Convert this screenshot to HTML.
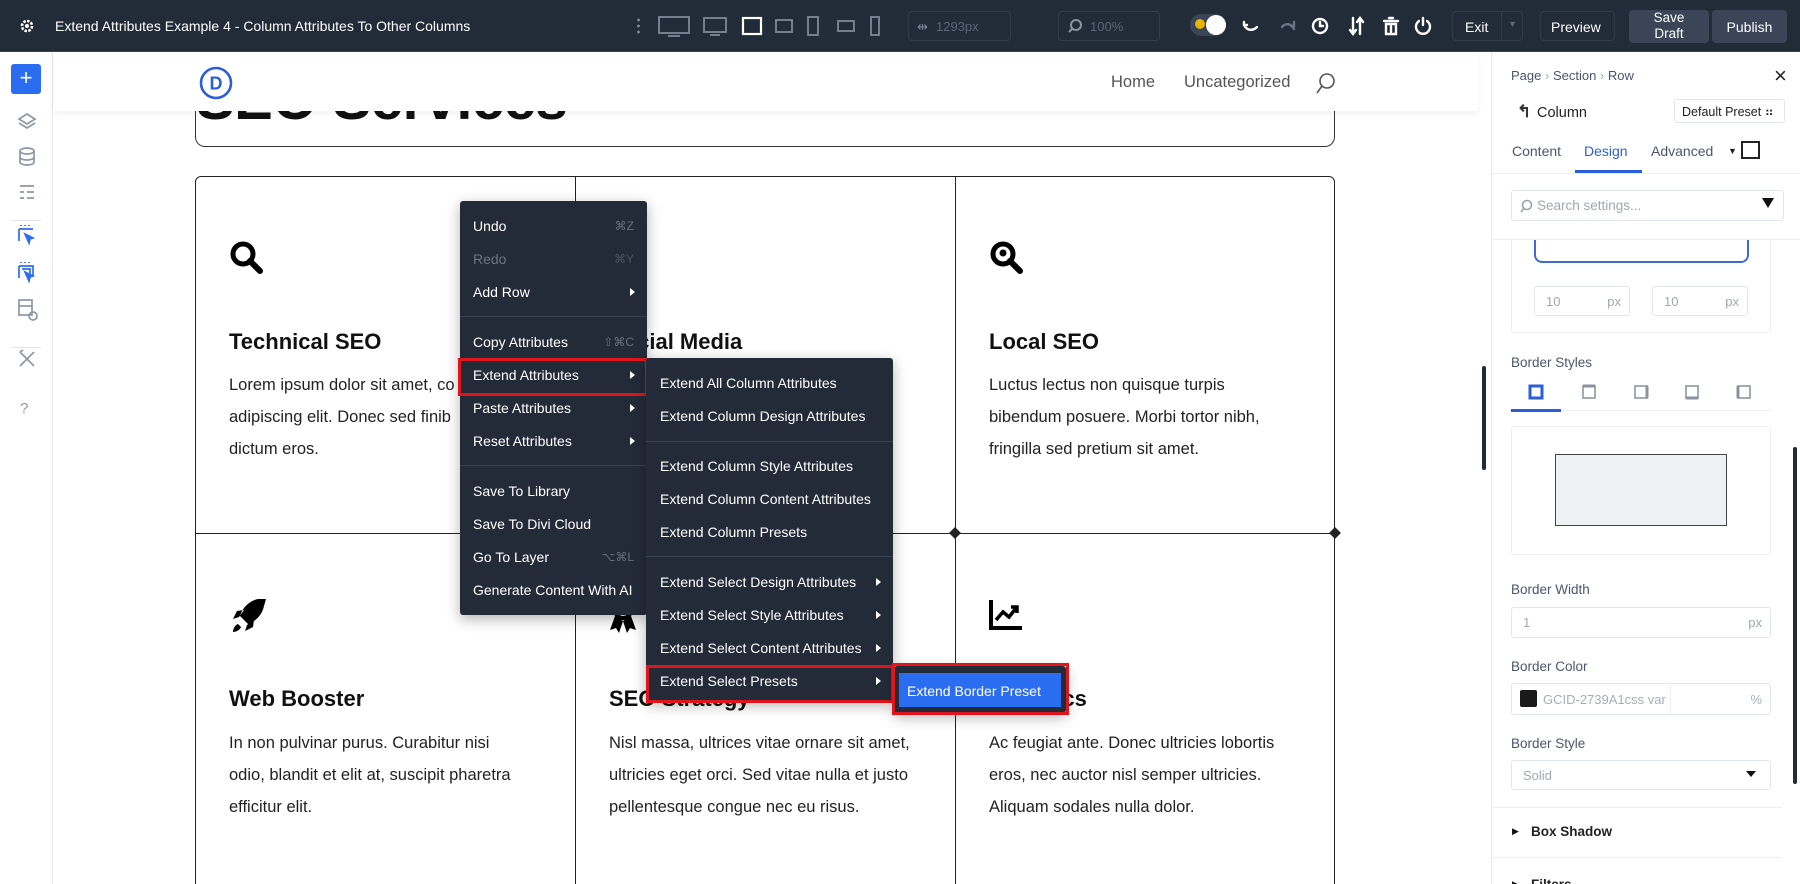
<!DOCTYPE html>
<html style="overflow:hidden;width:1800px;height:884px"><head><meta charset="utf-8">
<style>
*{box-sizing:border-box;margin:0;padding:0}
body{width:1800px;height:884px;overflow:hidden;background:#fff;font-family:"Liberation Sans",sans-serif;position:relative}
.a{position:absolute}
.top{left:0;top:0;width:1800px;height:52px;background:#222b38;border-bottom:1px solid #3a4452}
.tw{color:#fff;font-size:14px}
.box{border:1px solid #323c4a;border-radius:4px}
.side{left:0;top:52px;width:53px;height:832px;background:#fff;border-right:1px solid #e6e8ec}
.card{position:absolute;border:1.5px solid #222;background:#fff}
.ct{position:absolute;font-weight:bold;font-size:22px;color:#111}
.cb{position:absolute;font-size:16.5px;line-height:32px;color:#222;white-space:nowrap}
.menu{position:absolute;background:#232b38;border-radius:3px;box-shadow:0 4px 14px rgba(0,0,0,.3)}
.mi{position:absolute;left:13px;color:#fff;font-size:14px;white-space:nowrap}
.sc{position:absolute;right:13px;color:#666f7d;font-size:12px}
.ar{position:absolute;right:12px;width:0;height:0;border-left:5px solid #fff;border-top:4.5px solid transparent;border-bottom:4.5px solid transparent}
.sep{position:absolute;left:0;right:0;height:1px;background:#354050}
.rp{left:1491px;top:52px;width:309px;height:832px;background:#fff;border-left:1px solid #e6e8ec;overflow:hidden}
.lbl{position:absolute;left:19px;font-size:13.5px;color:#4a5570}
.inp{position:absolute;border:1px solid #e3e6ea;border-radius:3px;background:#fff;font-size:13px;color:#a0a7b2}
.red{position:absolute;border:3px solid #e0141c}
#wrap{position:absolute;left:0;top:0;width:1800px;height:884px;overflow:hidden}
</style></head><body><div id="wrap">

<div class="a top">
  <svg class="a" style="left:18px;top:17px" width="18" height="18" viewBox="0 0 18 18"><circle cx="9" cy="9" r="5" fill="none" stroke="#fff" stroke-width="2.6" stroke-dasharray="2.6 1.3"/><circle cx="9" cy="9" r="2" fill="#fff"/></svg>
  <div class="a tw" style="left:55px;top:18px">Extend Attributes Example 4 - Column Attributes To Other Columns</div>
  <div class="a" style="left:637px;top:17px;width:3px;height:18px;background:radial-gradient(circle,#7d8796 1.3px,transparent 1.5px) 0 0/3px 6px"></div>
  <svg class="a" style="left:658px;top:14px" width="240" height="24" viewBox="0 0 240 24" fill="none" stroke="#7d8796" stroke-width="1.8">
    <rect x="1" y="3" width="30" height="16"/><path d="M10 22h12"/>
    <rect x="46" y="4" width="22" height="14"/><path d="M52 21h10"/>
    <rect x="85" y="4" width="18" height="16" stroke="#fff" stroke-width="2.2"/>
    <rect x="118" y="6" width="16" height="12"/>
    <rect x="150" y="3" width="10" height="18"/>
    <rect x="180" y="7" width="16" height="10"/>
    <rect x="213" y="3" width="8" height="18"/>
  </svg>
  <div class="a box" style="left:908px;top:11px;width:103px;height:30px"></div>
  <div class="a" style="left:917px;top:19px;color:#7d8796;font-size:13px">⇹</div>
  <div class="a" style="left:936px;top:19px;color:#5b6574;font-size:13px">1293px</div>
  <div class="a box" style="left:1058px;top:11px;width:102px;height:30px"></div>
  <svg class="a" style="left:1067px;top:18px" width="16" height="16"><circle cx="9" cy="7" r="5" fill="none" stroke="#8a93a1" stroke-width="2"/><path d="M5 11l-3 3" stroke="#8a93a1" stroke-width="2"/></svg>
  <div class="a" style="left:1090px;top:19px;color:#5b6574;font-size:13px">100%</div>
  <div class="a" style="left:1190px;top:14px;width:36px;height:22px;border-radius:11px;background:#3a4555"></div>
  <div class="a" style="left:1195px;top:19px;width:10px;height:10px;border-radius:50%;background:#e8b400"></div>
  <div class="a" style="left:1206px;top:15px;width:20px;height:20px;border-radius:50%;background:#fff"></div>
  <svg class="a" style="left:1240px;top:14px" width="200" height="24" viewBox="0 0 200 24" fill="none" stroke-width="2.4" stroke-linecap="round">
    <path d="M4 11c3 6 9 6 13 2M4 11v-3M4 11h3" stroke="#fff"/>
    <path d="M54 15c-3-6-9-6-12-2M54 8v4h-3" stroke="#6a7482"/>
    <circle cx="80" cy="12" r="7" stroke="#fff"/><path d="M80 8v4h3" stroke="#fff"/>
    <path d="M113 4v16M110 16l3 4 3-4M120 20v-16M117 8l3-4 3 4" stroke="#fff"/>
    <path d="M144 7h14M149 4h4M146 10h10v10h-10zM151 12v6" stroke="#fff"/>
    <path d="M183 4v7M179 7a7 7 0 1 0 8 0" stroke="#fff"/>
  </svg>
  <div class="a box" style="left:1452px;top:11px;width:71px;height:30px"></div>
  <div class="a tw" style="left:1465px;top:19px">Exit</div>
  <div class="a" style="left:1501px;top:12px;width:1px;height:28px;background:#323c4a"></div>
  <div class="a" style="left:1508px;top:19px;color:#5b6574;font-size:9px">▼</div>
  <div class="a box" style="left:1540px;top:11px;width:75px;height:30px"></div>
  <div class="a tw" style="left:1551px;top:19px">Preview</div>
  <div class="a" style="left:1629px;top:10px;width:80px;height:33px;background:#3a4658;border-radius:4px"></div>
  <div class="a tw" style="left:1629px;top:10px;width:80px;text-align:center;font-size:13.5px;line-height:16px">Save<br>Draft</div>
  <div class="a" style="left:1712px;top:10px;width:75px;height:33px;background:#3a4658;border-radius:4px"></div>
  <div class="a tw" style="left:1712px;top:19px;width:75px;text-align:center">Publish</div>
</div>

<div class="a side">
  <div class="a" style="left:11px;top:12px;width:30px;height:30px;background:#2b6df0;border-radius:3px;color:#fff;font-size:22px;line-height:28px;text-align:center">+</div>
  <svg class="a" style="left:15px;top:60px" width="24" height="320" viewBox="0 0 24 320" fill="none" stroke="#8e97a6" stroke-width="1.7">
    <path d="M12 2l8 5-8 5-8-5zM4 11l8 5 8-5"/>
    <ellipse cx="12" cy="39" rx="7" ry="3"/><path d="M5 39v11c0 4 14 4 14 0v-11M5 45c0 4 14 4 14 0"/>
    <path d="M5 74h14M5 80h4M12 80h7M5 86h4M12 86h7"/>
    <path d="M4 117h14M4 117v12M6 113v1M10 113v1M14 113v1" stroke="#2b6df0"/><path d="M10 122l8 4-3 1-1 4z" fill="#2b6df0" stroke="#2b6df0"/>
    <path d="M4 154h14v10M4 154v12M6 150v1M10 150v1M14 150v1M7 157h8v6" stroke="#2b6df0"/><path d="M10 160l8 4-3 1-1 4z" fill="#2b6df0" stroke="#2b6df0"/>
    <rect x="4" y="188" width="13" height="15"/><path d="M4 194h13"/><circle cx="18" cy="204" r="4"/>
    <path d="M5 240l14 14M19 240l-14 14M5 240l3 -2"/>
  </svg>
  <div class="a" style="left:12px;top:168px;width:29px;height:1px;background:#e1e4e8"></div>
  <div class="a" style="left:12px;top:295px;width:29px;height:1px;background:#e1e4e8"></div>
  <div class="a" style="left:20px;top:348px;color:#8e97a6;font-size:15px">?</div>
</div>

<div class="a" style="left:196px;top:66px;font-weight:bold;font-size:58px;color:#111;letter-spacing:-.5px">SEO Services</div>
<div class="a" style="left:195px;top:80px;width:1140px;height:67px;border:1.5px solid #333;border-top:none;border-radius:0 0 10px 10px"></div>
<div class="a" style="left:53px;top:52px;width:1425px;height:59px;background:#fff;box-shadow:0 3px 6px rgba(0,0,0,.05)"></div>
<svg class="a" style="left:199px;top:66px" width="34" height="34"><circle cx="17" cy="17" r="15" fill="none" stroke="#2b5fd9" stroke-width="2.6"/><text x="17" y="23.5" text-anchor="middle" font-family="Liberation Sans" font-weight="bold" font-size="18" fill="#2b5fd9">D</text></svg>
<div class="a" style="left:1111px;top:73px;font-size:16.5px;color:#555">Home</div>
<div class="a" style="left:1184px;top:73px;font-size:16.5px;color:#555">Uncategorized</div>
<svg class="a" style="left:1314px;top:72px" width="22" height="24"><circle cx="13" cy="9" r="7" fill="none" stroke="#555" stroke-width="1.6"/><path d="M8 14l-5 7" stroke="#555" stroke-width="1.6"/></svg>

<div class="card" style="left:195px;top:176px;width:381px;height:358px;border-radius:6px 0 0 0"></div>
<div class="card" style="left:575px;top:176px;width:381px;height:358px"></div>
<div class="card" style="left:955px;top:176px;width:380px;height:358px;border-radius:0 6px 0 0"></div>
<div class="card" style="left:195px;top:533px;width:381px;height:360px"></div>
<div class="card" style="left:575px;top:533px;width:381px;height:360px"></div>
<div class="card" style="left:955px;top:533px;width:380px;height:360px"></div>
<div class="a" style="left:949px;top:527px;width:12px;height:12px;background:#222;transform:rotate(45deg) scale(.7)"></div>
<div class="a" style="left:569px;top:527px;width:12px;height:12px;background:#222;transform:rotate(45deg) scale(.7)"></div>
<div class="a" style="left:1329px;top:527px;width:12px;height:12px;background:#222;transform:rotate(45deg) scale(.7)"></div>

<svg class="a" style="left:229px;top:240px" width="36" height="36"><circle cx="14" cy="14" r="10" fill="none" stroke="#000" stroke-width="5"/><path d="M21 21l10 10" stroke="#000" stroke-width="6" stroke-linecap="round"/></svg>
<svg class="a" style="left:989px;top:240px" width="36" height="36"><circle cx="14" cy="14" r="10" fill="none" stroke="#000" stroke-width="5"/><circle cx="14" cy="13" r="3.5" fill="#000"/><path d="M21 21l10 10" stroke="#000" stroke-width="6" stroke-linecap="round"/></svg>
<svg class="a" style="left:228px;top:597px" width="40" height="40" viewBox="0 0 40 40"><path d="M30 2c-10 2-16 10-18 17l8 8c8-3 14-9 16-18l2-7zM11 20l-6 2 4-8 7-1zM19 28l-2 6 8-4 1-7zM10 27c-3 1-5 5-5 8 3 0 7-2 8-5z" fill="#000"/></svg>
<svg class="a" style="left:608px;top:600px" width="30" height="40" viewBox="0 0 30 40"><circle cx="15" cy="10" r="8" fill="none" stroke="#000" stroke-width="4"/><path d="M7 16l-5 14 6-2 3 5 4-12M23 16l5 14-6-2-3 5-4-12" fill="#000"/></svg>
<svg class="a" style="left:988px;top:598px" width="36" height="34"><path d="M3 2v28h31" fill="none" stroke="#000" stroke-width="4"/><path d="M8 22l7-8 6 5 8-10M23 9h6v6" fill="none" stroke="#000" stroke-width="3.5"/></svg>

<div class="ct" style="left:229px;top:329px">Technical SEO</div>
<div class="ct" style="left:609px;top:329px">Social Media</div>
<div class="ct" style="left:989px;top:329px">Local SEO</div>
<div class="cb" style="left:229px;top:369px">Lorem ipsum dolor sit amet, co<br>adipiscing elit. Donec sed finib<br>dictum eros.</div>
<div class="cb" style="left:989px;top:369px">Luctus lectus non quisque turpis<br>bibendum posuere. Morbi tortor nibh,<br>fringilla sed pretium sit amet.</div>
<div class="ct" style="left:229px;top:686px">Web Booster</div>
<div class="ct" style="left:609px;top:686px">SEO Strategy</div>
<div class="ct" style="left:989px;top:686px">Analytics</div>
<div class="cb" style="left:229px;top:727px">In non pulvinar purus. Curabitur nisi<br>odio, blandit et elit at, suscipit pharetra<br>efficitur elit.</div>
<div class="cb" style="left:609px;top:727px">Nisl massa, ultrices vitae ornare sit amet,<br>ultricies eget orci. Sed vitae nulla et justo<br>pellentesque congue nec eu risus.</div>
<div class="cb" style="left:989px;top:727px">Ac feugiat ante. Donec ultricies lobortis<br>eros, nec auctor nisl semper ultricies.<br>Aliquam sodales nulla dolor.</div>

<div class="a" style="left:1482px;top:366px;width:4px;height:104px;background:#222b38;border-radius:2px"></div>

<div class="menu" style="left:460px;top:201px;width:187px;height:414px">
  <div class="mi" style="top:17px">Undo</div><div class="sc" style="top:18px">⌘Z</div>
  <div class="mi" style="top:50px;color:#6a7482">Redo</div><div class="sc" style="top:51px;color:#4a5361">⌘Y</div>
  <div class="mi" style="top:83px">Add Row</div><div class="ar" style="top:87px"></div>
  <div class="sep" style="top:115px"></div>
  <div class="mi" style="top:133px">Copy Attributes</div><div class="sc" style="top:134px">⇧⌘C</div>
  <div class="mi" style="top:166px">Extend Attributes</div><div class="ar" style="top:170px"></div>
  <div class="mi" style="top:199px">Paste Attributes</div><div class="ar" style="top:203px"></div>
  <div class="mi" style="top:232px">Reset Attributes</div><div class="ar" style="top:236px"></div>
  <div class="sep" style="top:264px"></div>
  <div class="mi" style="top:282px">Save To Library</div>
  <div class="mi" style="top:315px">Save To Divi Cloud</div>
  <div class="mi" style="top:348px">Go To Layer</div><div class="sc" style="top:349px">⌥⌘L</div>
  <div class="mi" style="top:381px">Generate Content With AI</div>
</div>
<div class="red" style="left:458px;top:358px;width:190px;height:38px"></div>

<div class="menu" style="left:646px;top:358px;width:247px;height:343px">
  <div class="mi" style="top:17px;left:14px">Extend All Column Attributes</div>
  <div class="mi" style="top:50px;left:14px">Extend Column Design Attributes</div>
  <div class="sep" style="top:83px"></div>
  <div class="mi" style="top:100px;left:14px">Extend Column Style Attributes</div>
  <div class="mi" style="top:133px;left:14px">Extend Column Content Attributes</div>
  <div class="mi" style="top:166px;left:14px">Extend Column Presets</div>
  <div class="sep" style="top:198px"></div>
  <div class="mi" style="top:216px;left:14px">Extend Select Design Attributes</div><div class="ar" style="top:220px"></div>
  <div class="mi" style="top:249px;left:14px">Extend Select Style Attributes</div><div class="ar" style="top:253px"></div>
  <div class="mi" style="top:282px;left:14px">Extend Select Content Attributes</div><div class="ar" style="top:286px"></div>
  <div class="mi" style="top:315px;left:14px">Extend Select Presets</div><div class="ar" style="top:319px"></div>
</div>
<div class="red" style="left:646px;top:665px;width:248px;height:38px"></div>

<div class="menu" style="left:894px;top:666px;width:172px;height:47px"></div>
<div class="a" style="left:899px;top:673px;width:162px;height:34px;background:#2b6df0"></div>
<div class="mi" style="left:907px;top:683px">Extend Border Preset</div>
<div class="red" style="left:892px;top:663px;width:177px;height:52px"></div>

<div class="a rp">
  <div class="a" style="left:19px;top:16px;font-size:13px;color:#4a5570">Page <span style="color:#aab">›</span> Section <span style="color:#aab">›</span> Row</div>
  <div class="a" style="left:282px;top:11px;font-size:22px;color:#222">×</div>
  <div class="a" style="left:25px;top:50px;font-size:17px;color:#333;font-weight:bold">↰</div>
  <div class="a" style="left:45px;top:53px;font-size:14.5px;color:#222">Column</div>
  <div class="a" style="left:182px;top:47px;width:111px;height:24px;border:1px solid #e3e6ea;border-radius:3px;font-size:12.5px;color:#222;padding:4px 0 0 7px">Default Preset ⠶</div>
  <div class="a" style="left:20px;top:91px;font-size:14px;color:#4a5570">Content</div>
  <div class="a" style="left:92px;top:91px;font-size:14px;color:#2b5fd9">Design</div>
  <div class="a" style="left:159px;top:91px;font-size:14px;color:#4a5570">Advanced</div>
  <div class="a" style="left:236px;top:94px;font-size:9px;color:#222">▼</div>
  <div class="a" style="left:249px;top:89px;width:19px;height:18px;border:2px solid #222"></div>
  <div class="a" style="left:83px;top:118px;width:67px;height:3px;background:#2b5fd9"></div>
  <div class="a" style="left:0;top:121px;width:309px;height:1px;background:#eceef1"></div>
  <div class="inp" style="left:19px;top:138px;width:273px;height:31px;padding:7px 0 0 25px;font-size:13.5px">Search settings...</div>
  <svg class="a" style="left:27px;top:147px" width="14" height="14"><circle cx="8" cy="6" r="4.5" fill="none" stroke="#9aa2ae" stroke-width="1.6"/><path d="M5 9l-3 4" stroke="#9aa2ae" stroke-width="1.6"/></svg>
  <div class="a" style="left:270px;top:146px;width:0;height:0;border-left:6px solid transparent;border-right:6px solid transparent;border-top:10px solid #111"></div>
  <div class="a" style="left:0;top:187px;width:309px;height:1px;background:#eceef1"></div>
  <div class="a" style="left:19px;top:188px;width:260px;height:93px;border:1px solid #eceef1;border-top:none;border-radius:0 0 3px 3px"></div>
  <div class="a" style="left:42px;top:188px;width:215px;height:23px;border:2px solid #3d6bd1;border-top:none;border-radius:0 0 8px 8px"></div>
  <div class="inp" style="left:42px;top:234px;width:96px;height:30px;padding:7px 0 0 11px">10<span style="position:absolute;right:8px">px</span></div>
  <div class="inp" style="left:160px;top:234px;width:96px;height:30px;padding:7px 0 0 11px">10<span style="position:absolute;right:8px">px</span></div>
  <div class="lbl" style="top:303px">Border Styles</div>
  <svg class="a" style="left:19px;top:330px" width="260" height="24" fill="none" stroke="#9aa2ae" stroke-width="1.8">
    <rect x="19" y="4" width="12" height="12" stroke="#2b5fd9" stroke-width="3"/>
    <rect x="72" y="4" width="12" height="12"/><path d="M72 4h12" stroke="#8a93a1" stroke-width="3"/>
    <rect x="124" y="4" width="12" height="12"/><path d="M136 4v12" stroke="#8a93a1" stroke-width="3"/>
    <rect x="175" y="4" width="12" height="12"/><path d="M175 16h12" stroke="#8a93a1" stroke-width="3"/>
    <rect x="227" y="4" width="12" height="12"/><path d="M227 4v12" stroke="#8a93a1" stroke-width="3"/>
  </svg>
  <div class="a" style="left:19px;top:358px;width:260px;height:1px;background:#eceef1"></div>
  <div class="a" style="left:19px;top:357px;width:50px;height:3px;background:#2b5fd9"></div>
  <div class="a" style="left:19px;top:374px;width:260px;height:129px;border:1px solid #eceef1;border-radius:3px"></div>
  <div class="a" style="left:63px;top:402px;width:172px;height:72px;border:1px solid #444;background:#eef0f4"></div>
  <div class="lbl" style="top:530px">Border Width</div>
  <div class="inp" style="left:19px;top:555px;width:260px;height:31px;padding:7px 0 0 11px">1<span style="position:absolute;right:8px">px</span></div>
  <div class="lbl" style="top:607px">Border Color</div>
  <div class="inp" style="left:19px;top:631px;width:260px;height:32px;padding:8px 0 0 31px;color:#a8aeb8">GCID-2739A1css var<span style="position:absolute;right:8px">%</span></div>
  <div class="a" style="left:28px;top:638px;width:17px;height:17px;background:#1a1a1a;border-radius:2px"></div>
  <div class="a" style="left:178px;top:632px;width:1px;height:30px;background:#eceef1"></div>
  <div class="lbl" style="top:684px">Border Style</div>
  <div class="inp" style="left:19px;top:708px;width:260px;height:30px;padding:7px 0 0 11px">Solid</div>
  <div class="a" style="left:254px;top:719px;width:0;height:0;border-left:5px solid transparent;border-right:5px solid transparent;border-top:6px solid #111"></div>
  <div class="a" style="left:0;top:755px;width:290px;height:1px;background:#eceef1"></div>
  <div class="a" style="left:20px;top:774px;font-size:9px;color:#111">▶</div>
  <div class="a" style="left:39px;top:772px;font-size:13.5px;color:#222;font-weight:bold">Box Shadow</div>
  <div class="a" style="left:0;top:805px;width:290px;height:1px;background:#eceef1"></div>
  <div class="a" style="left:20px;top:827px;font-size:9px;color:#111">▶</div>
  <div class="a" style="left:39px;top:825px;font-size:13.5px;color:#222;font-weight:bold">Filters</div>
  <div class="a" style="left:301px;top:395px;width:4px;height:337px;background:#222b38;border-radius:2px"></div>
</div>
</div></body></html>
